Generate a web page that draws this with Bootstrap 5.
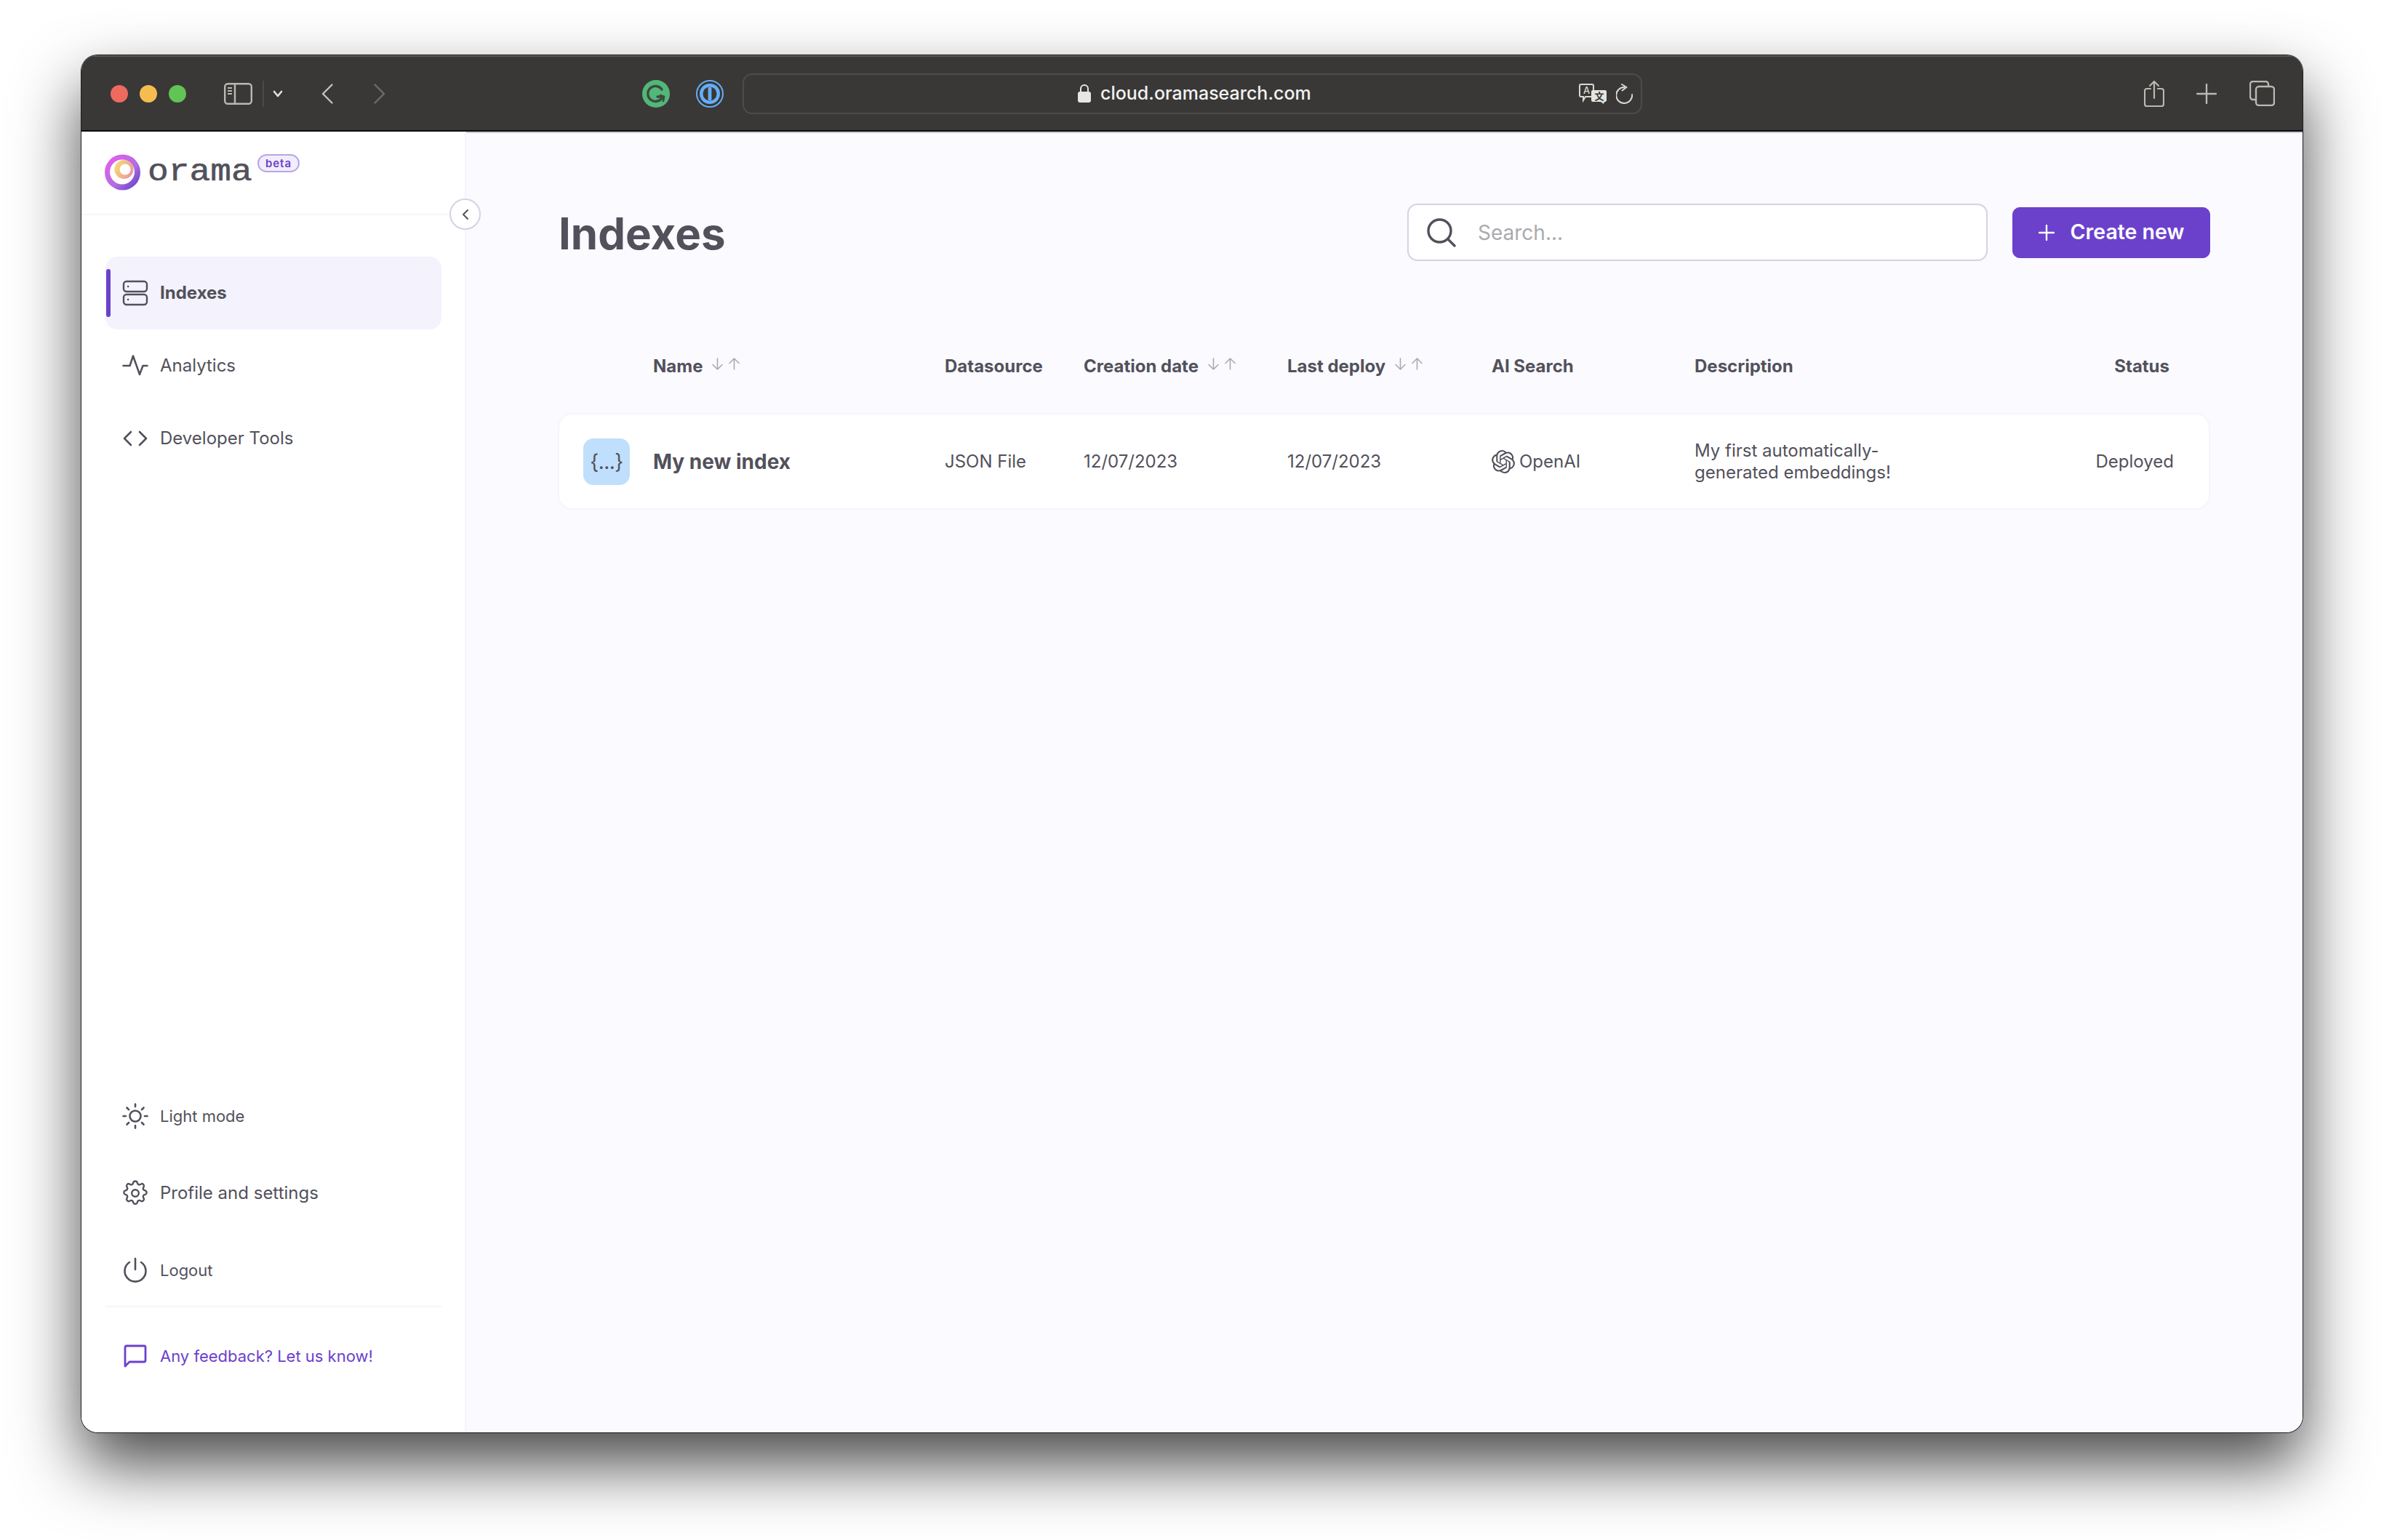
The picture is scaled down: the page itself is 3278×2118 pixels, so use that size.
<!DOCTYPE html>
<html lang="en">
  <head>
    <meta charset="UTF-8" />
    <meta name="viewport" content="width=device-width, initial-scale=1.0" />
    <link href="https://cdn.jsdelivr.net/npm/bootstrap@5.3.3/dist/css/bootstrap.min.css" rel="stylesheet" />
    <script src="https://cdn.jsdelivr.net/npm/bootstrap@5.3.3/dist/js/bootstrap.bundle.min.js"></script>
    <title>Orama Cloud - Indexes</title>

    <style>
      html, body { height: 100%; }
      body {
        background: #fff;
        padding: 76px 112px 148px;
        font-family: "Inter", "Liberation Sans", sans-serif;
        color: #52515b;
        overflow: hidden;
      }
      svg { display: block; flex-shrink: 0; }
      .win {
        height: 1894px;
        border-radius: 22px;
        overflow: hidden;
      }
      .win-wrap {
        border-radius: 22px;
        box-shadow: 0 0 0 1px #1d1d1d, 0 44px 90px rgba(0, 0, 0, .72);
      }

      /* safari bar */
      .tb {
        height: 105px;
        flex-shrink: 0;
        background: #393836;
        padding-left: 40px;
        border-top: 2px solid #5a5957;
        border-bottom: 2px solid #0c0c0c;
        box-shadow: 0 2px 0 #c9c9d2;
        position: relative;
      }
      .dot { width: 24px; height: 24px; border-radius: 50%; margin-right: 16px; }
      .t-side { margin-left: 36px; }
      .t-div { margin-left: 14px; width: 2px; height: 36px; background: #4b4a48; }
      .t-chev { margin-left: 12px; }
      .t-back { margin-left: 53px; }
      .t-fwd { margin-left: 56px; }
      .t-g { margin-left: 353px; }
      .t-op { margin-left: 36px; }
      .addr {
        margin-left: 26px;
        width: 1237px;
        height: 56px;
        border: 2px solid #4d4c4a;
        border-radius: 13px;
        color: #f2f2f2;
        font-size: 25px;
        font-weight: 500;
        padding-right: 11px;
      }
      .addr-mid { margin-left: 459px; width: 320px; gap: 13px; }
      .t-tr { margin-left: auto; gap: 13px; }
      .t-share { margin-left: 690px; }
      .t-plus { margin-left: 44px; }
      .t-tabs { margin-left: 45px; }

      /* sidebar */
      .side {
        width: 529px;
        flex-shrink: 0;
        background: #fff;
        border-right: 2px solid #f5f5fb;
        position: relative;
      }
      .side-top {
        height: 115px;
        border-bottom: 2px solid #f5f5fb;
        padding: 31px 0 0 32px;
      }
      .logo-word {
        font-family: "Liberation Mono", "DejaVu Sans Mono", monospace;
        font-size: 42px;
        line-height: 46px;
        color: #52515b;
        width: 143px;
        margin-left: 9px;
        margin-top: 2px;
        transform: scaleX(1.14);
        transform-origin: left center;
        -webkit-text-stroke: .6px #52515b;
      }
      .beta {
        width: 58px;
        height: 25px;
        margin-left: 8px;
        border: 2px solid #b8a5e8;
        border-radius: 13px;
        background: #f1edfb;
        color: #6b41cc;
        font-size: 15px;
        line-height: 21px;
        font-weight: 600;
        letter-spacing: 1px;
        text-align: center;
      }
      .collapse-btn {
        position: absolute;
        top: 92px;
        right: -22px;
        width: 43px;
        height: 43px;
        padding: 0;
        background: #fff;
        border: 2px solid #d0d5e2;
        border-radius: 50%;
        z-index: 2;
      }
      .side-nav { padding: 57px 32px 0 33px; }
      .side-link {
        height: 100px;
        padding: 0 0 0 23px;
        gap: 16px;
        color: #52515b;
        font-size: 24px;
        border-radius: 16px;
        position: relative;
      }
      .side-link:hover { color: #52515b; }
      .side-link.on { background: #f4f2fd; font-weight: 700; }
      .side-link.on::before {
        content: "";
        position: absolute;
        left: 1px;
        top: 17px;
        width: 6px;
        height: 66px;
        border-radius: 3px;
        background: #6b41cc;
      }
      .side-low { margin-top: auto; padding: 0 32px 0 33px; }
      .side-low .side-link { height: 106px; padding-top: 8px; font-size: 22px; }
      .side-low .side-link.wide { font-size: 24px; }
      .side-sep { height: 2px; background: #f5f5fb; }
      .side-low .side-link.fb { height: 134px; padding-top: 0; color: #6b41cc; margin-bottom: 38px; }
      .ico { width: 36px; display: flex; justify-content: center; }

      /* main */
      .mainp {
        background: #fafaff;
        padding: 99px 127px 0 128px;
        min-width: 0;
      }
      .page-title { font-size: 60px; font-weight: 700; height: 79px; line-height: 82px; margin: 0 0 0 -1px; color: #52515b; }
      .srch {
        width: 798px;
        height: 79px;
        background: #fff;
        border: 2px solid #d0d5e2;
        border-radius: 14px;
        padding-left: 25px;
        gap: 30px;
        margin-left: auto;
      }
      .srch input {
        border: 0;
        padding: 0;
        background: transparent;
        font-size: 28px;
        color: #52515b;
        box-shadow: none;
      }
      .srch input::placeholder { color: #aaaaaf; }
      .new-btn {
        width: 272px;
        height: 70px;
        margin-left: 34px;
        padding: 0;
        gap: 22px;
        background: #6b41cc;
        border-color: #6b41cc;
        border-radius: 10px;
        color: #fff;
        font-size: 28.5px;
        font-weight: 600;
      }
      .idx-cols {
        display: grid;
        grid-template-columns: 129px 401px 191px 280px 281px 279px 1fr auto;
        align-items: center;
      }
      .idx-head {
        height: 60px;
        margin-top: 115px;
        font-size: 24px;
        font-weight: 700;
        line-height: 1;
      }
      .idx-head > div:last-child { padding-right: 56px; }
      .sort { gap: 6px; margin-left: 12px; margin-top: -8px; }
      .idx-row {
        height: 129px;
        margin: 36px 2px 0 0;
        background: #fff;
        box-shadow: 0 0 0 2px #f5f5fb;
        border-radius: 18px;
        font-size: 24px;
      }
      .idx-row > div:last-child { padding-right: 48px; }
      .json-box {
        width: 64px;
        height: 64px;
        margin-left: 33px;
        border-radius: 14px;
        background: #bfdffc;
        font-size: 28px;
        letter-spacing: -.5px;
      }
      .row-name { font-size: 28px; font-weight: 700; }
      .ai-cell { gap: 6px; }
      .desc-cell { line-height: 30px; width: 340px; }
    </style>
  </head>
  <body>
    <div class="win-wrap">
      <div class="win d-flex flex-column">
        <div class="tb d-flex align-items-center">
          <div class="dot" style="background:#ee6a5f"></div>
          <div class="dot" style="background:#f5bd4f"></div>
          <div class="dot" style="background:#61c454"></div>
          <svg class="t-side" width="39" height="30" viewBox="0 0 39 30" fill="none" stroke="#b9b8b5" stroke-width="2.4"><rect x="1.2" y="1.2" width="36.6" height="27.6" rx="4"/><path d="M15 1v28"/><path d="M5 7h6M5 11h6M5 15h6" stroke-width="1.8"/></svg>
          <div class="t-div"></div>
          <svg class="t-chev" width="14" height="10" viewBox="0 0 14 10" fill="none" stroke="#e2e2e0" stroke-width="2.6" stroke-linecap="round" stroke-linejoin="round"><path d="M2 2l5 6 5-6"/></svg>
          <svg class="t-back" width="16" height="28" viewBox="0 0 16 28" fill="none" stroke="#c4c3c0" stroke-width="2.4" stroke-linecap="round" stroke-linejoin="round"><path d="M14.5 1.5L2 14l12.500 12.500"/></svg>
          <svg class="t-fwd" width="16" height="28" viewBox="0 0 16 28" fill="none" stroke="#6e6d6a" stroke-width="2.4" stroke-linecap="round" stroke-linejoin="round"><path d="M1.500 1.500L14 14 1.500 26.500"/></svg>
          <svg class="t-g" width="38" height="38" viewBox="0 0 38 38" fill="none"><circle cx="19" cy="19" r="19" fill="#52b777"/><path d="M27 13a10.500 10.500 0 1 0 1 10h-7" stroke="#3c4a41" stroke-width="3.400" stroke-linecap="round"/><path d="M25 21l5 2-1 6" stroke="#3c4a41" stroke-width="2.600" stroke-linecap="round"/></svg>
          <svg class="t-op" width="38" height="38" viewBox="0 0 38 38" fill="none"><circle cx="19" cy="19" r="18" fill="#383734" stroke="#65aef6" stroke-width="2"/><circle cx="19" cy="19" r="14" fill="#65aef6"/><circle cx="19" cy="19" r="9.500" fill="#383734"/><rect x="16.600" y="10" width="4.800" height="18" rx="1" fill="#65aef6"/></svg>
          <div class="addr d-flex align-items-center">
            <div class="addr-mid d-flex align-items-center">
              <svg width="18" height="25" viewBox="0 0 18 25" fill="none"><rect y="10" width="18" height="15" rx="3" fill="#e6e6e6"/><path d="M4 11V6a5 5 0 0 1 10 0v5" stroke="#e6e6e6" stroke-width="2"/></svg>
              <span>cloud.oramasearch.com</span>
            </div>
            <div class="t-tr d-flex align-items-center">
              <svg width="38" height="28" viewBox="0 0 38 28" fill="none"><path d="M3 1h15a2 2 0 0 1 2 2v13a2 2 0 0 1-2 2H9l-3 5v-5H3a2 2 0 0 1-2-2V3a2 2 0 0 1 2-2z" stroke="#d8d8d6" stroke-width="2"/><text x="6" y="14" font-size="13" font-family="Inter, sans-serif" fill="#d8d8d6">A</text><path d="M19 9h17a2 2 0 0 1 2 2v12a2 2 0 0 1-2 2h-1l-1 3-4-3H19a2 2 0 0 1-2-2V11a2 2 0 0 1 2-2z" fill="#e4e4e2"/><text x="21.500" y="22" font-size="13" font-weight="700" font-family="'Noto Sans CJK SC', sans-serif" fill="#383734">文</text></svg>
              <svg width="23" height="28" viewBox="0 0 23 28" fill="none" stroke="#d8d8d6" stroke-width="2" stroke-linecap="round" stroke-linejoin="round"><path d="M11.500 5A11 11 0 1 0 22.200 15"/><path d="M8 1l6.500 4-6 4.500"/></svg>
            </div>
          </div>
          <svg class="t-share" width="28" height="37" viewBox="0 0 28 37" fill="none" stroke="#b9b8b5" stroke-width="2.200" stroke-linecap="round" stroke-linejoin="round"><path d="M9 12H4a3 3 0 0 0-3 3v18a3 3 0 0 0 3 3h20a3 3 0 0 0 3-3V15a3 3 0 0 0-3-3h-5"/><path d="M14 25V2M8 8l6-6 6 6"/></svg>
          <svg class="t-plus" width="28" height="28" viewBox="0 0 28 28" fill="none" stroke="#b9b8b5" stroke-width="2.400" stroke-linecap="round"><path d="M14 1v26M1 14h26"/></svg>
          <svg class="t-tabs" width="35" height="35" viewBox="0 0 35 35" fill="none" stroke="#b9b8b5" stroke-width="2.400"><rect x="9" y="8" width="25" height="26" rx="4"/><path d="M9 26H5a4 4 0 0 1-4-4V5a4 4 0 0 1 4-4h17a4 4 0 0 1 4 4v3"/></svg>
        </div>

        <div class="d-flex flex-grow-1" style="min-height:0">
          <aside class="side d-flex flex-column">
            <div class="side-top d-flex align-items-start">
              <svg width="50" height="50" viewBox="0 0 50 50">
                <defs>
                  <linearGradient id="ringG" x1="0.100" y1="0.100" x2="0.900" y2="0.900"><stop offset="0" stop-color="#e65cf0"/><stop offset=".6" stop-color="#b06fe0"/><stop offset="1" stop-color="#6b41cc"/></linearGradient>
                  <linearGradient id="innerG" x1="0" y1="0.300" x2="1" y2="0.800"><stop offset="0" stop-color="#f3dc70"/><stop offset="1" stop-color="#ee90a8"/></linearGradient>
                </defs>
                <circle cx="24.500" cy="25" r="24.500" fill="url(#ringG)"/>
                <circle cx="24" cy="24.500" r="17" fill="#fff"/>
                <circle cx="26.500" cy="21" r="13" fill="url(#innerG)"/>
                <circle cx="28" cy="21" r="7.500" fill="#fff"/>
              </svg>
              <span class="logo-word">orama</span>
              <span class="beta">beta</span>
            </div>
            <button class="collapse-btn d-flex align-items-center justify-content-center" type="button" aria-label="Collapse">
              <svg width="10" height="16" viewBox="0 0 10 16" fill="none" stroke="#52515b" stroke-width="2" stroke-linecap="round" stroke-linejoin="round"><path d="M8 2L2 8l6 6"/></svg>
            </button>

            <nav class="nav flex-column side-nav">
              <a class="nav-link side-link on d-flex align-items-center" href="#">
                <span class="ico"><svg width="36" height="36" viewBox="0 0 36 36" fill="none" stroke="#52515b" stroke-width="2.400" stroke-linecap="round"><rect x="2" y="2" width="32" height="14" rx="4"/><rect x="2" y="20" width="32" height="14" rx="4"/><path d="M8 9h.2M8 27h.2"/></svg></span>
                Indexes
              </a>
              <a class="nav-link side-link d-flex align-items-center" href="#">
                <span class="ico"><svg width="36" height="36" viewBox="0 0 24 24" fill="none" stroke="#52515b" stroke-width="1.700" stroke-linecap="round" stroke-linejoin="round"><path d="M23 12h-4l-3 8-6-17-3 9H1"/></svg></span>
                Analytics
              </a>
              <a class="nav-link side-link d-flex align-items-center" href="#">
                <span class="ico"><svg width="36" height="36" viewBox="0 0 36 36" fill="none" stroke="#52515b" stroke-width="2.600" stroke-linecap="round" stroke-linejoin="round"><path d="M12 9l-9 9 9 9M24 9l9 9-9 9"/></svg></span>
                Developer Tools
              </a>
            </nav>

            <div class="side-low">
              <a class="nav-link side-link d-flex align-items-center" href="#">
                <span class="ico"><svg width="36" height="36" viewBox="0 0 36 36" fill="none" stroke="#52515b" stroke-width="2.600" stroke-linecap="round"><circle cx="18" cy="18" r="7.500"/><path d="M18 1.500v3.500M18 31v3.500M1.500 18H5M31 18h3.500M6.500 6.500L9 9M27 27l2.500 2.500M6.500 29.500L9 27M27 9l2.500-2.500"/></svg></span>
                Light mode
              </a>
              <a class="nav-link side-link wide d-flex align-items-center" href="#">
                <span class="ico"><svg width="36" height="36" viewBox="0 0 24 24" fill="none" stroke="#52515b" stroke-width="1.600" stroke-linecap="round" stroke-linejoin="round"><path d="M10.300 1.900c.4-1.200 3-1.200 3.400 0l.3 1a1.800 1.800 0 0 0 2.600 1.100l1-.5c1.100-.6 2.900 1.200 2.300 2.300l-.5 1a1.800 1.800 0 0 0 1.100 2.600l1 .3c1.200.4 1.200 3 0 3.400l-1 .3a1.800 1.800 0 0 0-1.100 2.600l.5 1c.6 1.100-1.200 2.900-2.300 2.300l-1-.5a1.800 1.800 0 0 0-2.600 1.100l-.3 1c-.4 1.200-3 1.200-3.400 0l-.3-1a1.800 1.800 0 0 0-2.600-1.100l-1 .5c-1.100.6-2.900-1.200-2.300-2.300l.5-1a1.800 1.800 0 0 0-1.100-2.600l-1-.3c-1.200-.4-1.200-3 0-3.400l1-.3a1.800 1.800 0 0 0 1.100-2.600l-.5-1c-.6-1.100 1.200-2.900 2.300-2.300l1 .5a1.800 1.800 0 0 0 2.600-1.100z"/><circle cx="12" cy="12" r="3.200"/></svg></span>
                Profile and settings
              </a>
              <a class="nav-link side-link d-flex align-items-center" href="#">
                <span class="ico"><svg width="36" height="36" viewBox="0 0 36 36" fill="none" stroke="#52515b" stroke-width="2.600" stroke-linecap="round"><path d="M18 2v15"/><path d="M10 7a14.500 14.500 0 1 0 16 0" /></svg></span>
                Logout
              </a>
              <div class="side-sep"></div>
              <a class="nav-link side-link fb d-flex align-items-center" href="#">
                <span class="ico"><svg width="32" height="32" viewBox="0 0 32 32" fill="none" stroke="#6b41cc" stroke-width="2.800" stroke-linejoin="round"><path d="M4 2h24a2 2 0 0 1 2 2v18a2 2 0 0 1-2 2H8l-6 6V4a2 2 0 0 1 2-2z"/></svg></span>
                Any feedback? Let us know!
              </a>
            </div>
          </aside>

          <main class="mainp flex-grow-1">
            <div class="d-flex align-items-center">
              <h1 class="page-title">Indexes</h1>
              <div class="srch d-flex align-items-center">
                <svg width="40" height="40" viewBox="0 0 40 40" fill="none" stroke="#52515b" stroke-width="3.400" stroke-linecap="round"><circle cx="17.500" cy="17.500" r="15.500"/><path d="M29 29l9 9"/></svg>
                <input class="form-control" type="text" placeholder="Search..." />
              </div>
              <button class="btn new-btn d-flex align-items-center justify-content-center" type="button">
                <svg width="22" height="22" viewBox="0 0 22 22" fill="none" stroke="#fff" stroke-width="2.400" stroke-linecap="round"><path d="M11 1v20M1 11h20"/></svg>
                Create new
              </button>
            </div>

            <div class="idx-cols idx-head">
              <div></div>
              <div class="d-flex align-items-center">Name
                <span class="sort d-flex"><svg width="17" height="17" viewBox="0 0 17 17" fill="none" stroke="#aaaaaf" stroke-width="1.600" stroke-linecap="round" stroke-linejoin="round"><path d="M8.500 1v15M2 9.500l6.500 6.500L15 9.500"/></svg><svg width="17" height="17" viewBox="0 0 17 17" fill="none" stroke="#aaaaaf" stroke-width="1.600" stroke-linecap="round" stroke-linejoin="round"><path d="M8.500 16V1M2 7.500L8.500 1 15 7.500"/></svg></span>
              </div>
              <div>Datasource</div>
              <div class="d-flex align-items-center">Creation date
                <span class="sort d-flex"><svg width="17" height="17" viewBox="0 0 17 17" fill="none" stroke="#aaaaaf" stroke-width="1.600" stroke-linecap="round" stroke-linejoin="round"><path d="M8.500 1v15M2 9.500l6.500 6.500L15 9.500"/></svg><svg width="17" height="17" viewBox="0 0 17 17" fill="none" stroke="#aaaaaf" stroke-width="1.600" stroke-linecap="round" stroke-linejoin="round"><path d="M8.500 16V1M2 7.500L8.500 1 15 7.500"/></svg></span>
              </div>
              <div class="d-flex align-items-center">Last deploy
                <span class="sort d-flex"><svg width="17" height="17" viewBox="0 0 17 17" fill="none" stroke="#aaaaaf" stroke-width="1.600" stroke-linecap="round" stroke-linejoin="round"><path d="M8.500 1v15M2 9.500l6.500 6.500L15 9.500"/></svg><svg width="17" height="17" viewBox="0 0 17 17" fill="none" stroke="#aaaaaf" stroke-width="1.600" stroke-linecap="round" stroke-linejoin="round"><path d="M8.500 16V1M2 7.500L8.500 1 15 7.500"/></svg></span>
              </div>
              <div>AI Search</div>
              <div>Description</div>
              <div>Status</div>
            </div>

            <div class="idx-cols idx-row">
              <div class="json-box d-flex align-items-center justify-content-center">{...}</div>
              <div class="row-name">My new index</div>
              <div>JSON File</div>
              <div>12/07/2023</div>
              <div>12/07/2023</div>
              <div class="ai-cell d-flex align-items-center">
                <svg width="32" height="32" viewBox="0 0 24 24" fill="#52515b"><path d="M22.2819 9.8211a5.9847 5.9847 0 0 0-.5157-4.9108 6.0462 6.0462 0 0 0-6.5098-2.9A6.0651 6.0651 0 0 0 4.9807 4.1818a5.9847 5.9847 0 0 0-3.9977 2.9 6.0462 6.0462 0 0 0 .7427 7.0966 5.98 5.98 0 0 0 .511 4.9107 6.051 6.051 0 0 0 6.5146 2.9001A5.9847 5.9847 0 0 0 13.2599 24a6.0557 6.0557 0 0 0 5.7718-4.2058 5.9894 5.9894 0 0 0 3.9977-2.9001 6.0557 6.0557 0 0 0-.7475-7.0729zm-9.022 12.6081a4.4755 4.4755 0 0 1-2.8764-1.0408l.1419-.0804 4.7783-2.7582a.7948.7948 0 0 0 .3927-.6813v-6.7369l2.02 1.1686a.071.071 0 0 1 .038.052v5.5826a4.504 4.504 0 0 1-4.4945 4.4944zm-9.6607-4.1254a4.4708 4.4708 0 0 1-.5346-3.0137l.142.0852 4.783 2.7582a.7712.7712 0 0 0 .7806 0l5.8428-3.3685v2.3324a.0804.0804 0 0 1-.0332.0615L9.74 19.9502a4.4992 4.4992 0 0 1-6.1408-1.6464zM2.3408 7.8956a4.485 4.485 0 0 1 2.3655-1.9728V11.6a.7664.7664 0 0 0 .3879.6765l5.8144 3.3543-2.0201 1.1685a.0757.0757 0 0 1-.071 0l-4.8303-2.7865A4.504 4.504 0 0 1 2.3408 7.872zm16.5963 3.8558L13.1038 8.364 15.1192 7.2a.0757.0757 0 0 1 .071 0l4.8303 2.7913a4.4944 4.4944 0 0 1-.6765 8.1042v-5.6772a.79.79 0 0 0-.407-.667zm2.0107-3.0231l-.142-.0852-4.7735-2.7818a.7759.7759 0 0 0-.7854 0L9.409 9.2297V6.8974a.0662.0662 0 0 1 .0284-.0615l4.8303-2.7866a4.4992 4.4992 0 0 1 6.6802 4.66zM8.3065 12.863l-2.02-1.1638a.0804.0804 0 0 1-.038-.0567V6.0742a4.4992 4.4992 0 0 1 7.3757-3.4537l-.142.0805L8.704 5.459a.7948.7948 0 0 0-.3927.6813zm1.0976-2.3654l2.602-1.4998 2.6069 1.4998v2.9994l-2.5974 1.4997-2.6067-1.4997Z"/></svg>
                OpenAI
              </div>
              <div class="desc-cell">My first automatically-generated embeddings!</div>
              <div>Deployed</div>
            </div>
          </main>
        </div>
      </div>
    </div>
  </body>
</html>
